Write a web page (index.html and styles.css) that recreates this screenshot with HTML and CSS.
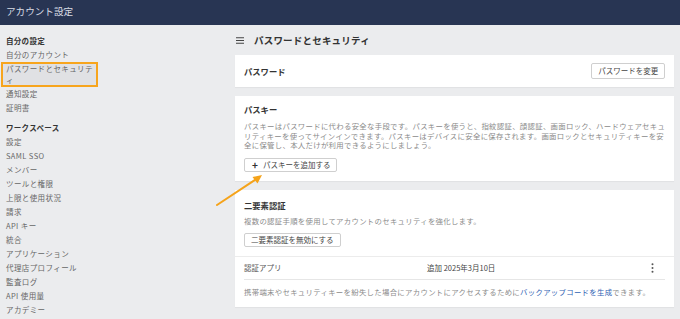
FILE: index.html
```html
<!DOCTYPE html>
<html lang="ja">
<head>
    <meta charset="UTF-8">
    <meta name="viewport" content="width=device-width, initial-scale=1.0">
    <title>アカウント設定</title>
    <link rel="stylesheet" href="styles.css">
</head>
<body>
    <header class="topbar">アカウント設定</header>

    <div class="layout">
        <nav class="sidebar">
            <div class="nav-heading">自分の設定</div>
            <a class="nav-item">自分のアカウント</a>
            <a class="nav-item active">パスワードとセキュリティ</a>
            <a class="nav-item">通知設定</a>
            <a class="nav-item">証明書</a>

            <div class="nav-heading spaced">ワークスペース</div>
            <a class="nav-item">設定</a>
            <a class="nav-item">SAML SSO</a>
            <a class="nav-item">メンバー</a>
            <a class="nav-item">ツールと権限</a>
            <a class="nav-item">上限と使用状況</a>
            <a class="nav-item">請求</a>
            <a class="nav-item">API キー</a>
            <a class="nav-item">統合</a>
            <a class="nav-item">アプリケーション</a>
            <a class="nav-item">代理店プロフィール</a>
            <a class="nav-item">監査ログ</a>
            <a class="nav-item">API 使用量</a>
            <a class="nav-item">アカデミー</a>
        </nav>

        <main class="content">
            <h1 class="page-title">
                <svg class="menu-icon" viewBox="0 0 8 7" width="8" height="7">
                    <path d="M0 0.75h8M0 3.5h8M0 6.25h8" stroke="#444" stroke-width="1"/>
                </svg>
                パスワードとセキュリティ
            </h1>

            <section class="card card-row">
                <h2>パスワード</h2>
                <button class="btn">パスワードを変更</button>
            </section>

            <section class="card">
                <div class="card-body">
                    <h2>パスキー</h2>
                    <p class="desc">パスキーはパスワードに代わる安全な手段です。パスキーを使うと、指紋認証、顔認証、画面ロック、ハードウェアセキュ<br>リティキーを使ってサインインできます。パスキーはデバイスに安全に保存されます。画面ロックとセキュリティキーを安<br>全に保管し、本人だけが利用できるようにしましょう。</p>
                    <button class="btn btn-add"><span class="plus">+</span>パスキーを追加する</button>
                </div>
            </section>

            <section class="card">
                <div class="card-body tfa">
                    <h2>二要素認証</h2>
                    <p class="desc">複数の認証手順を使用してアカウントのセキュリティを強化します。</p>
                    <button class="btn">二要素認証を無効にする</button>
                </div>
                <div class="method-row">
                    <span class="method-name">認証アプリ</span>
                    <span class="method-date">追加 2025年3月10日</span>
                    <svg class="kebab" viewBox="0 0 3 10" width="3" height="10">
                        <circle cx="1.5" cy="1.3" r="1" fill="#555"/>
                        <circle cx="1.5" cy="5" r="1" fill="#555"/>
                        <circle cx="1.5" cy="8.7" r="1" fill="#555"/>
                    </svg>
                </div>
                <p class="backup">携帯端末やセキュリティキーを紛失した場合にアカウントにアクセスするために<a href="#">バックアップコードを生成</a>できます。</p>
            </section>
        </main>
    </div>

    <!-- annotation arrow pointing at the add-passkey button -->
    <svg class="annotation" width="60" height="45" viewBox="0 0 60 45">
        <line x1="7" y1="39" x2="48" y2="12" stroke="#f5a31a" stroke-width="2" stroke-linecap="round"/>
        <path d="M52 9 L42.5 11 L47.5 17.5 Z" fill="#f5a31a"/>
    </svg>
</body>
</html>
```

FILE: styles.css
```css
* {
    box-sizing: border-box;
}
body {
    margin: 0;
    height: 319px;
    overflow: hidden;
    background: #ebecee;
    font-family: "Noto Sans CJK JP", "Noto Sans", sans-serif;
    color: #333;
    position: relative;
}
.topbar {
    height: 25px;
    background: #283553;
    color: #d9dde5;
    font-size: 9.6px;
    line-height: 22px;
    padding-left: 6px;
}
.layout {
    display: grid;
    grid-template-columns: 100px 1fr;
}
.sidebar {
    padding-top: 9px;
    display: flex;
    flex-direction: column;
}
.nav-heading {
    font-size: 7.5px;
    font-weight: 700;
    color: #333;
    line-height: 14px;
    padding-left: 6px;
    letter-spacing: 0.3px;
}
.nav-heading.spaced {
    margin-top: 6px;
}
.nav-item {
    font-size: 7.5px;
    line-height: 14px;
    color: #666;
    padding-left: 6px;
    letter-spacing: 0.4px;
    text-decoration: none;
}
.nav-item.active {
    margin-left: 1px;
    width: 97px;
    padding-left: 3px;
    border: 2px solid #f7a51d;
    background: #e0e1e4;
    line-height: 10.5px;
}
.content {
    padding: 8px 8px 0 135px;
}
.page-title {
    margin: 0 0 8px;
    font-size: 9.5px;
    line-height: 14px;
    font-weight: 700;
    color: #333;
    display: flex;
    align-items: center;
    gap: 10px;
    padding-left: 1px;
    letter-spacing: 0.2px;
}
.card {
    background: #fff;
    margin-bottom: 9px;
    font-size: 7.5px;
    line-height: 10px;
    box-shadow: 0 1px 1px rgba(0,0,0,0.04);
}
.card h2 {
    margin: 0;
    font-size: 8.3px;
    line-height: 10px;
    font-weight: 700;
    color: #333;
}
.card-row {
    height: 32px;
    display: flex;
    justify-content: space-between;
    align-items: center;
    padding: 0 9px;
}
.card-body {
    padding: 8px 9px 9px;
}
.card-body.tfa {
    padding: 10px 9px 9px;
    border-bottom: 1px solid #ececec;
}
.desc {
    margin: 7px 0 8px;
    font-size: 7.4px;
    line-height: 9.7px;
    letter-spacing: 0.3px;
    color: #8a8a8a;
    white-space: nowrap;
}
.tfa .desc {
    margin: 6px 0 7px;
}
.btn {
    font-family: inherit;
    font-size: 7.5px;
    color: #444;
    background: #fff;
    border: 1px solid #cfcfcf;
    border-radius: 2px;
    height: 14px;
    padding: 0 6px;
    line-height: 12px;
}
.card-body .btn {
    display: block;
    width: fit-content;
}
.card-row .btn {
    height: 16px;
}
.card-body .btn-add {
    display: flex;
    align-items: center;
    padding: 0 6px 0 7px;
}
.plus {
    font-size: 10px;
    font-weight: 700;
    color: #333;
    margin-right: 5px;
    line-height: 10px;
}
.method-row {
    display: flex;
    align-items: center;
    height: 23px;
    margin: 0 9px;
    border-bottom: 1px solid #e6e6e6;
    color: #555;
}
.method-name {
    width: 183px;
}
.method-date {
    flex: 1;
    color: #444;
}
.kebab {
    margin-right: 11px;
}
.backup {
    margin: 0;
    padding: 7px 9px 10px;
    font-size: 7.4px;
    letter-spacing: 0.3px;
    line-height: 10px;
    color: #8a8a8a;
}
.backup a {
    color: #2f62b3;
    text-decoration: none;
}
.annotation {
    position: absolute;
    left: 210px;
    top: 166px;
}
```
